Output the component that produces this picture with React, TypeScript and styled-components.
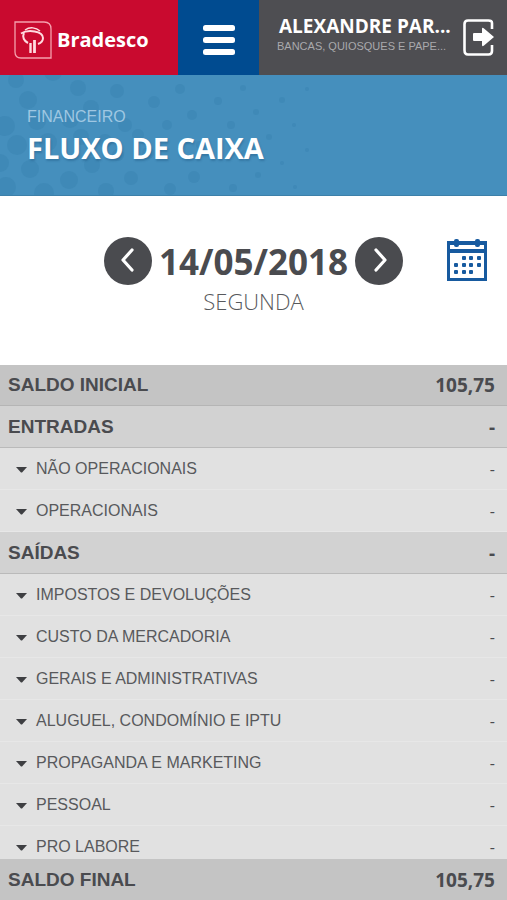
import React, { useState } from "react";
import styled, { createGlobalStyle } from "styled-components";

const GlobalStyle = createGlobalStyle`
  *, *::before, *::after { box-sizing: border-box; }
  body { margin: 0; background: #fff; color: #4a4b4f; font-family: "Open Sans", "Noto Sans", sans-serif; }
  button { font: inherit; color: inherit; background: none; border: 0; padding: 0; cursor: pointer; }
  h1, h2, p { margin: 0; font-weight: inherit; }
  svg { display: block; }
`;

const arial = `"Liberation Sans", Arial, sans-serif`;

const Page = styled.div`
  display: flex;
  flex-direction: column;
  height: 100vh;
`;

const TopBar = styled.header`
  display: flex;
  flex: none;
  height: 75px;
  background: #4e4e52;
  color: #fff;
`;

const Brand = styled.a`
  display: flex;
  align-items: center;
  gap: 5px;
  width: 178px;
  padding: 4px 0 0 14px;
  background: #c90a2f;
  color: #fff;
  font-size: 20px;
  font-weight: 700;
  text-decoration: none;
`;

const MenuButton = styled.button`
  display: flex;
  align-items: center;
  justify-content: center;
  width: 81px;
  padding-top: 4px;
  background: #004b90;
`;

const Account = styled.div`
  flex: 1;
  min-width: 0;
  padding: 16px 0 0 18px;
  white-space: nowrap;
`;

const AccountName = styled.p`
  padding-left: 2px;
  font-size: 19px;
  font-weight: 700;
  line-height: 20px;
`;

const AccountType = styled.p`
  font-family: ${arial};
  font-size: 11px;
  line-height: 20px;
  color: #a9a9ac;
`;

const LogoutButton = styled.button`
  flex: none;
  width: 44px;
  padding-right: 12px;
`;

const Banner = styled.section`
  position: relative;
  flex: none;
  height: 121px;
  padding: 32px 27px 0;
  overflow: hidden;
  background: #458fbd;
  border-bottom: 1px solid #3d80a9;
  color: #fff;
`;

const BannerDots = styled.svg`
  position: absolute;
  left: 0;
  top: 0;
`;

const BannerText = styled.div`
  position: relative;
`;

const Section = styled.p`
  font-family: ${arial};
  font-size: 16px;
  line-height: 20px;
  color: #9fc7e2;
`;

const Title = styled.h1`
  font-size: 29px;
  font-weight: 700;
  line-height: 42px;
  white-space: nowrap;
  text-shadow: 1px 2px 2px rgba(20, 70, 110, 0.3);
`;

const DateBar = styled.section`
  display: grid;
  grid-template-columns: 1fr auto 1fr;
  flex: none;
  height: 169px;
  padding: 41px 19px 0;
`;

const DatePicker = styled.div`
  display: grid;
  grid-template-columns: 48px auto 48px;
  grid-column: 2;
  column-gap: 7px;
  align-content: start;
  text-align: center;
`;

const RoundButton = styled.button`
  display: flex;
  align-items: center;
  justify-content: center;
  width: 48px;
  height: 48px;
  border-radius: 50%;
  background: #4a4b4f;
`;

const CurrentDate = styled.h2`
  font-size: 35px;
  font-weight: 700;
  line-height: 50px;
`;

const Weekday = styled.p`
  grid-column: 2;
  font-size: 22px;
  font-weight: 300;
  line-height: 28px;
  color: #58595c;
`;

const CalendarButton = styled.button`
  justify-self: end;
  align-self: start;
  padding-top: 2px;
`;

const Scroller = styled.main`
  flex: 1;
  min-height: 0;
  overflow-y: auto;
  scrollbar-width: none;
  background: #e1e1e1;
`;

const Table = styled.table`
  width: 100%;
  border-collapse: separate;
  border-spacing: 0;

  th, td { padding: 0 12px 0 8px; }
  th { text-align: left; }
  td { text-align: right; }
`;

type Kind = "total" | "group" | "item";
const rowHeights = { total: 41, group: 42, item: 42 };
const rowColors = { total: "#c4c4c4", group: "#d2d2d2", item: "#e1e1e1" };
const lineColors = { total: "#b5b5b5", group: "#bababa", item: "#e7e7e7" };

const Row = styled.tr<{ $kind: Kind }>`
  height: ${(p) => rowHeights[p.$kind]}px;
  background: ${(p) => rowColors[p.$kind]};
  font-size: 19px;
  line-height: 24px;
  font-weight: ${(p) => (p.$kind === "item" ? 400 : 700)};

  th { font-family: ${arial}; font-weight: inherit; }
  td { font-size: ${(p) => (p.$kind === "item" ? 16 : 19)}px; }
  th, td { border-bottom: 1px solid ${(p) => lineColors[p.$kind]}; }
`;

const Foot = styled.tfoot`
  position: sticky;
  bottom: 0;

  th, td { border-bottom: 0; }
`;

const ItemButton = styled.button`
  display: flex;
  align-items: center;
  gap: 9px;
  padding-left: 8px;
  font-size: 16px;
  line-height: 24px;
  color: #58595c;
`;

const Caret = styled.svg<{ $open: boolean }>`
  margin-top: 3px;
  transform: rotate(${(p) => (p.$open ? 180 : 0)}deg);
`;

const dots = [
  [16, 5, 8], [53, -3, 9], [78, 13, 8], [28, 25, 9], [5, 51, 10], [116, -10, 8],
  [91, 33, 8], [117, 16, 7], [37, 46, 9], [70, 44, 9], [154, 27, 6],
  [180, 14, 5], [125, 50, 7], [17, 70, 10], [48, 67, 9], [81, 62, 8], [105, 66, 7],
  [138, 60, 6], [167, 50, 5], [192, 40, 5], [218, 26, 4], [243, 13, 3], [200, 70, 4],
  [0, 88, 9], [30, 94, 9], [92, 90, 8], [118, 80, 6], [148, 78, 6],
  [6, 112, 10], [44, 118, 10], [69, 105, 9], [106, 116, 8], [131, 103, 7], [170, 114, 6],
  [194, 102, 6], [233, 113, 4], [231, 50, 4], [256, 37, 3], [282, 25, 3], [307, 14, 2],
  [244, 78, 3], [269, 62, 3], [294, 50, 2],
  [282, 88, 2], [307, 75, 2], [258, 100, 3], [295, 112, 2],
];

const entries: { label: string; kind: Kind }[] = [
  { label: "ENTRADAS", kind: "group" },
  { label: "NÃO OPERACIONAIS", kind: "item" },
  { label: "OPERACIONAIS", kind: "item" },
  { label: "SAÍDAS", kind: "group" },
  { label: "IMPOSTOS E DEVOLUÇÕES", kind: "item" },
  { label: "CUSTO DA MERCADORIA", kind: "item" },
  { label: "GERAIS E ADMINISTRATIVAS", kind: "item" },
  { label: "ALUGUEL, CONDOMÍNIO E IPTU", kind: "item" },
  { label: "PROPAGANDA E MARKETING", kind: "item" },
  { label: "PESSOAL", kind: "item" },
  { label: "PRO LABORE", kind: "item" },
];

function BradescoMark() {
  return (
    <svg width="38" height="38" viewBox="0 0 38 38" fill="none" stroke="#ffdbe0" aria-hidden="true">
      <path d="M1 1H30Q37 1 37 8V37H7Q1 37 1 31Z" stroke="#f5a0ad" strokeWidth="1.3" />
      <path d="M11 9C16 5.500 22 6.500 26 10" strokeWidth="1.5" />
      <path d="M7 12.500C14 8 29 10 29 17C29 20 27 22 24 23" strokeWidth="2" />
      <path d="M10 12C8 16 10 20 14 22" strokeWidth="2" />
      <path d="M16.500 22V32" strokeWidth="2.400" />
      <path d="M20.500 19V32" strokeWidth="2.800" />
    </svg>
  );
}

function CalendarIcon() {
  const marks = [[17, 19], [24, 19], [32, 19], [9, 26], [17, 26], [24, 26], [32, 26], [9, 33], [17, 33], [24, 33]];
  return (
    <svg width="42" height="43" viewBox="0 0 42 43" fill="#175a9f" aria-hidden="true">
      <path fillRule="evenodd" d="M1 2H41V42H1ZM4 14V39H38V14ZM4 6V10H38V6Z" />
      <rect x="8" y="0" width="5" height="8" rx="2" />
      <rect x="29" y="0" width="5" height="8" rx="2" />
      {marks.map(([x, y]) => (
        <rect key={`${x}-${y}`} x={x - 1} y={y - 2} width="4" height="4" rx="1" />
      ))}
    </svg>
  );
}

function Chevron({ d }: { d: string }) {
  return (
    <svg width="24" height="28" viewBox="0 0 24 28" fill="none" stroke="#fff" strokeWidth="3.200" strokeLinecap="round" strokeLinejoin="round" aria-hidden="true">
      <path d={d} />
    </svg>
  );
}

function Entry({ label }: { label: string }) {
  const [open, setOpen] = useState(false);
  return (
    <ItemButton aria-expanded={open} onClick={() => setOpen(!open)}>
      <Caret $open={open} width="11" height="6" viewBox="0 0 11 6" aria-hidden="true">
        <path d="M0 0H11L6.500 5Q5.500 6 4.500 5Z" fill="#3e3f42" />
      </Caret>
      {label}
    </ItemButton>
  );
}

export default function App() {
  return (
    <Page>
      <GlobalStyle />
      <TopBar>
        <Brand href="#">
          <BradescoMark />
          Bradesco
        </Brand>
        <MenuButton aria-label="Menu">
          <svg width="32" height="30" viewBox="0 0 32 30" fill="#fff" aria-hidden="true">
            <rect width="32" height="6" rx="2.500" />
            <rect y="12" width="32" height="6" rx="2.500" />
            <rect y="24" width="32" height="6" rx="2.500" />
          </svg>
        </MenuButton>
        <Account>
          <AccountName>ALEXANDRE PAR...</AccountName>
          <AccountType>BANCAS, QUIOSQUES E PAPE...</AccountType>
        </Account>
        <LogoutButton aria-label="Sair">
          <svg width="32" height="38" viewBox="0 0 32 38" fill="none" aria-hidden="true">
            <path d="M29 10V4Q29 1.500 25.500 1.500H5Q1.500 1.500 1.500 5V31Q1.500 35.500 5 35.500H25.500Q29 35.500 29 32V26" stroke="#fff" strokeWidth="2.600" />
            <path d="M11 14H19V10Q19 8 21 9.500L31 18L21 26.500Q19 28 19 26V22H11Q10 22 10 21V15Q10 14 11 14Z" fill="#fff" />
          </svg>
        </LogoutButton>
      </TopBar>

      <Banner>
        <BannerDots width="320" height="120" viewBox="0 0 320 120" fill="#3a83b1" fillOpacity="0.5" aria-hidden="true">
          {dots.map(([cx, cy, r]) => (
            <circle key={`${cx}-${cy}`} cx={cx} cy={cy} r={r} />
          ))}
        </BannerDots>
        <BannerText>
          <Section>FINANCEIRO</Section>
          <Title>FLUXO DE CAIXA</Title>
        </BannerText>
      </Banner>

      <DateBar>
        <DatePicker>
          <RoundButton aria-label="Dia anterior">
            <Chevron d="M16 3L7 13L16 23" />
          </RoundButton>
          <CurrentDate>14/05/2018</CurrentDate>
          <RoundButton aria-label="Próximo dia">
            <Chevron d="M9 3L18 13L9 23" />
          </RoundButton>
          <Weekday>SEGUNDA</Weekday>
        </DatePicker>
        <CalendarButton aria-label="Abrir calendário">
          <CalendarIcon />
        </CalendarButton>
      </DateBar>

      <Scroller>
        <Table>
          <thead>
            <Row $kind="total">
              <th scope="row">SALDO INICIAL</th>
              <td>105,75</td>
            </Row>
          </thead>
          <tbody>
            {entries.map(({ label, kind }) => (
              <Row key={label} $kind={kind}>
                <th scope="row">{kind === "item" ? <Entry label={label} /> : label}</th>
                <td>-</td>
              </Row>
            ))}
          </tbody>
          <Foot>
            <Row $kind="total">
              <th scope="row">SALDO FINAL</th>
              <td>105,75</td>
            </Row>
          </Foot>
        </Table>
      </Scroller>
    </Page>
  );
}
